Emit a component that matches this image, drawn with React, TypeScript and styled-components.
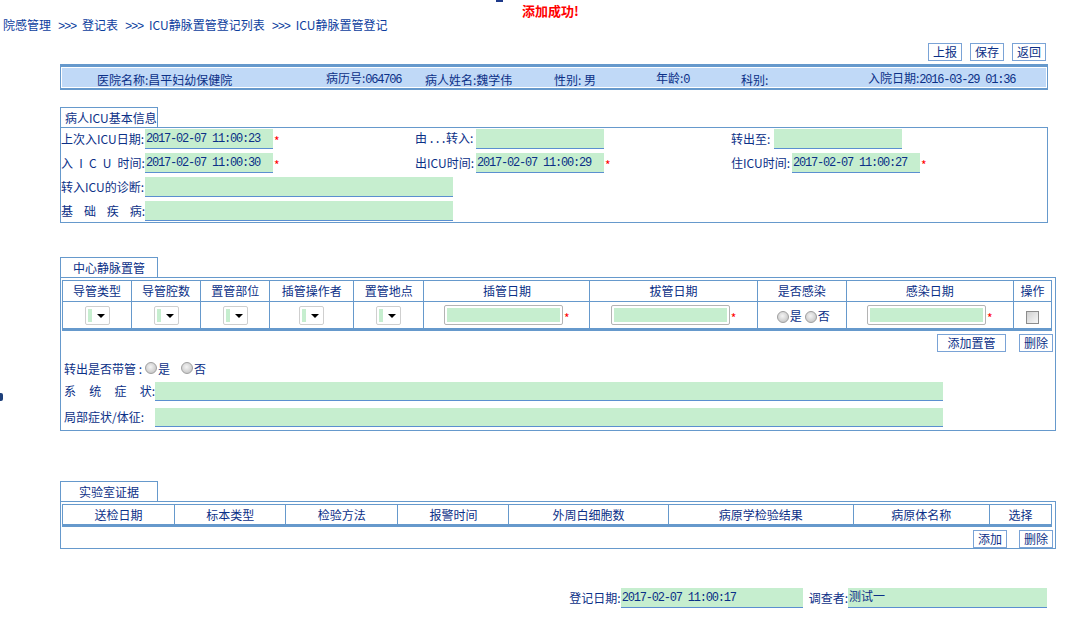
import React from 'react';
import styled, { createGlobalStyle } from 'styled-components';

const line = '#6699cc';
const ink = '#0b3087';
const green = '#c6eecf';

const GlobalStyle = createGlobalStyle`
  html, body { margin: 0; padding: 0; background: #fff; }
  body {
    font-family: "Noto Sans CJK SC", "Liberation Sans", sans-serif;
    font-size: 12px;
    color: ${ink};
  }
  * { box-sizing: border-box; }
`;

const Page = styled.div`
  position: relative;
  width: 1081px;
  height: 641px;
  overflow: hidden;
`;

// 顶部小标记
const TopMark = styled.span`
  position: absolute;
  left: 496px;
  top: 0;
  width: 7px;
  height: 2px;
  background: #1e3a8a;
`;

const SideMark = styled.span`
  position: absolute;
  left: 0;
  top: 393px;
  width: 3px;
  height: 8px;
  background: #1d3f7a;
  border-radius: 0 2px 2px 0;
`;

const Notice = styled.div`
  height: 18px;
  padding-top: 2px;
  padding-left: 20px;
  text-align: center;
  line-height: 18px;
  font-size: 13px;
  font-weight: bold;
  color: #ff0000;
`;

const Crumbs = styled.div`
  padding-left: 3px;
  line-height: 14px;
  height: 14px;
  color: #0d3e9e;
  white-space: nowrap;
`;

const Mono = styled.span`
  font-family: "Liberation Mono", "DejaVu Sans Mono", monospace;
  font-size: 12px;
  letter-spacing: -1.2px;
`;

const Sep = styled(Mono)`
  margin: 0 6px 0 7px;
`;

const Dots = styled(Mono)`
  margin-left: 1px;
`;

const Toolbar = styled.div<{ $top?: number; $right?: number; $gap?: number }>`
  display: flex;
  justify-content: flex-end;
  gap: ${p => p.$gap ?? 8}px;
  margin-top: ${p => p.$top ?? 0}px;
  padding-right: ${p => p.$right ?? 0}px;
`;

const Btn = styled.button`
  height: 18px;
  padding: 0 4px;
  background: #fff;
  border: 1px solid #7aa3d6;
  color: ${ink};
  font: inherit;
  font-size: 12px;
  line-height: 16px;
  cursor: pointer;
`;

const InfoBar = styled.div`
  margin: 3px 0 0 60px;
  width: 988px;
  border: solid ${line};
  border-width: 3px 1px 2px;
  background: #fff;
  padding: 1px;
`;

const InfoInner = styled.div`
  display: grid;
  grid-template-columns: 229px 99px 129px 102px 85px 127px 1fr;
  align-items: center;
  height: 19px;
  padding-left: 35px;
  background: #c0d9f7;
  white-space: nowrap;
  line-height: 19px;
`;

const Section = styled.section<{ $top: number; $width: number }>`
  margin: ${p => p.$top}px 0 0 60px;
  width: ${p => p.$width}px;
`;

const Tab = styled.div<{ $center?: boolean }>`
  width: 98px;
  height: 20px;
  border: 1px solid ${line};
  border-bottom: none;
  line-height: 19px;
  padding-left: ${p => (p.$center ? 0 : 4)}px;
  text-align: ${p => (p.$center ? 'center' : 'left')};
  font-size: 12px;
`;

const Panel = styled.div<{ $pb?: number }>`
  border: 1px solid ${line};
  padding-bottom: ${p => p.$pb ?? 0}px;
`;

const BaseGrid = styled.div`
  display: grid;
  grid-template-columns: 354px 316px 1fr;
  grid-auto-rows: 20px;
  row-gap: 4px;
  padding: 1px 0;
`;

const Field = styled.div<{ $wide?: boolean }>`
  display: flex;
  align-items: center;
  white-space: nowrap;
  ${p => (p.$wide ? 'grid-column: 1 / -1;' : '')}
`;

const Label = styled.span<{ $w?: number }>`
  ${p => (p.$w ? `width: ${p.$w}px;` : '')}
  flex-shrink: 0;
  line-height: 16px;
`;

const Spread = styled.span<{ $w: number }>`
  display: flex;
  justify-content: space-between;
  width: ${p => p.$w}px;
  flex-shrink: 0;
  line-height: 16px;
`;

const TextBox = styled.div<{ $w: number; $h?: number }>`
  width: ${p => p.$w}px;
  height: ${p => p.$h ?? 20}px;
  background: ${green};
  border-bottom: 1px solid #5b8fd0;
  line-height: 16px;
  padding-left: 1px;
  overflow: hidden;
  white-space: nowrap;
`;

const Star = styled.span`
  color: #ff0000;
  margin: 4px 0 0 1px;
  font-size: 12px;
  line-height: 12px;
`;

const Table = styled.table`
  width: 990px;
  margin: 2px 0 0 1px;
  border-collapse: collapse;
  table-layout: fixed;
  border: 1px solid ${line};
  border-bottom: 3px solid ${line};
`;

const Th = styled.th`
  height: 21px;
  border: 1px solid ${line};
  font-weight: normal;
  text-align: center;
  padding: 0;
  line-height: 16px;
  color: ${ink};
`;

const Td = styled.td`
  height: 28px;
  border: 1px solid ${line};
  text-align: center;
  padding: 0;
  white-space: nowrap;
`;

const Picker = styled.span`
  display: inline-flex;
  align-items: center;
  width: 25px;
  height: 19px;
  border: 1px solid #cfcfcf;
  border-radius: 2px;
  background: #fff;
  vertical-align: middle;
  padding-left: 2px;
`;

const PickerFill = styled.span`
  width: 4px;
  height: 13px;
  background: ${green};
`;

const PickerArrow = styled.span`
  margin-left: auto;
  margin-right: 4px;
  border-left: 4px solid transparent;
  border-right: 4px solid transparent;
  border-top: 4px solid #000;
`;

const CellDate = styled.span`
  display: inline-block;
  width: 119px;
  height: 20px;
  border: 1px solid #b4b4b4;
  border-radius: 2px;
  padding: 2px;
  background: ${green};
  background-clip: content-box;
  vertical-align: middle;
`;

const CellStar = styled(Star)`
  display: inline-block;
  vertical-align: middle;
  margin: 6px 0 0 1px;
`;

const Radio = styled.span`
  display: inline-block;
  width: 12px;
  height: 12px;
  border-radius: 50%;
  border: 1px solid #a0a0a0;
  background: radial-gradient(circle at 45% 40%, #f4f4f4 0%, #c9c9c9 75%);
  vertical-align: -2px;
  margin: 0 1px 0 3px;
`;

const Check = styled.span`
  display: inline-block;
  width: 13px;
  height: 13px;
  border: 1px solid #8c8c8c;
  background: linear-gradient(135deg, #d0d0d0, #f8f8f8);
  vertical-align: middle;
`;

const OptionRow = styled.div<{ $top: number; $h: number }>`
  display: flex;
  align-items: center;
  margin-top: ${p => p.$top}px;
  height: ${p => p.$h}px;
  padding-left: 3px;
  white-space: nowrap;
`;

const Footer = styled.div`
  display: flex;
  justify-content: flex-end;
  align-items: center;
  margin-top: 39px;
  padding-right: 34px;
  white-space: nowrap;
`;

const FooterGap = styled.span`
  width: 6px;
`;

const lineCols = [69, 69, 69, 84, 70, 166, 167, 89, 167, 38];
const lineHeads = ['导管类型', '导管腔数', '置管部位', '插管操作者', '置管地点', '插管日期', '拔管日期', '是否感染', '感染日期', '操作'];
const labCols = [112, 111, 112, 111, 159, 185, 136, 62];
const labHeads = ['送检日期', '标本类型', '检验方法', '报警时间', '外周白细胞数', '病原学检验结果', '病原体名称', '选择'];

const SelectBox = () => (
  <Picker>
    <PickerFill />
    <PickerArrow />
  </Picker>
);

const DateCell = () => (
  <>
    <CellDate />
    <CellStar>*</CellStar>
  </>
);

export default function App() {
  return (
    <Page>
      <GlobalStyle />
      <TopMark />
      <SideMark />
      <Notice>添加成功!</Notice>
      <Crumbs>
        院感管理<Sep>&gt;&gt;&gt;</Sep>登记表<Sep>&gt;&gt;&gt;</Sep>ICU静脉置管登记列表<Sep>&gt;&gt;&gt;</Sep>ICU静脉置管登记
      </Crumbs>

      <Toolbar $top={11} $right={35}>
        <Btn>上报</Btn>
        <Btn>保存</Btn>
        <Btn>返回</Btn>
      </Toolbar>

      <InfoBar>
        <InfoInner>
          <span>医院名称:昌平妇幼保健院</span>
          <span>病历号:<Mono>064706</Mono></span>
          <span>病人姓名:魏学伟</span>
          <span>性别: 男</span>
          <span>年龄:<Mono>0</Mono></span>
          <span>科别:</span>
          <span>入院日期:<Mono>2016-03-29 01:36</Mono></span>
        </InfoInner>
      </InfoBar>

      <Section $top={17} $width={988}>
        <Tab>病人ICU基本信息</Tab>
        <Panel>
          <BaseGrid>
            <Field>
              <Label $w={84}>上次入ICU日期:</Label>
              <TextBox $w={128}><Mono>2017-02-07 11:00:23</Mono></TextBox>
              <Star>*</Star>
            </Field>
            <Field>
              <Label $w={61}>由<Dots>...</Dots>转入:</Label>
              <TextBox $w={128} />
            </Field>
            <Field>
              <Label $w={43}>转出至:</Label>
              <TextBox $w={128} />
            </Field>

            <Field>
              <Spread $w={84}><span>入</span><span>I</span><span>C</span><span>U</span><span>时间:</span></Spread>
              <TextBox $w={128}><Mono>2017-02-07 11:00:30</Mono></TextBox>
              <Star>*</Star>
            </Field>
            <Field>
              <Label $w={61}>出ICU时间:</Label>
              <TextBox $w={128}><Mono>2017-02-07 11:00:29</Mono></TextBox>
              <Star>*</Star>
            </Field>
            <Field>
              <Label $w={61}>住ICU时间:</Label>
              <TextBox $w={128}><Mono>2017-02-07 11:00:27</Mono></TextBox>
              <Star>*</Star>
            </Field>

            <Field $wide>
              <Label $w={84}>转入ICU的诊断:</Label>
              <TextBox $w={308} />
            </Field>
            <Field $wide>
              <Spread $w={84}><span>基</span><span>础</span><span>疾</span><span>病:</span></Spread>
              <TextBox $w={308} />
            </Field>
          </BaseGrid>
        </Panel>
      </Section>

      <Section $top={34} $width={996}>
        <Tab $center>中心静脉置管</Tab>
        <Panel $pb={3}>
          <Table>
            <colgroup>
              {lineCols.map((w, i) => <col key={i} style={{ width: w }} />)}
            </colgroup>
            <thead>
              <tr>
                {lineHeads.map(h => <Th key={h}>{h}</Th>)}
              </tr>
            </thead>
            <tbody>
              <tr>
                <Td><SelectBox /></Td>
                <Td><SelectBox /></Td>
                <Td><SelectBox /></Td>
                <Td><SelectBox /></Td>
                <Td><SelectBox /></Td>
                <Td><DateCell /></Td>
                <Td><DateCell /></Td>
                <Td><Radio />是<Radio />否</Td>
                <Td><DateCell /></Td>
                <Td><Check /></Td>
              </tr>
            </tbody>
          </Table>
          <Toolbar $top={3} $right={2} $gap={13}>
            <Btn style={{ width: 69 }}>添加置管</Btn>
            <Btn>删除</Btn>
          </Toolbar>
          <OptionRow $top={7} $h={18}>
            转出是否带管 :<Radio />是 &nbsp;&nbsp;<Radio />否
          </OptionRow>
          <OptionRow $top={4} $h={20}>
            <Spread $w={91}><span>系</span><span>统</span><span>症</span><span>状:</span></Spread>
            <TextBox $w={788} $h={19} />
          </OptionRow>
          <OptionRow $top={6} $h={20}>
            <Label $w={91}>局部症状/体征:</Label>
            <TextBox $w={788} $h={19} />
          </OptionRow>
        </Panel>
      </Section>

      <Section $top={50} $width={996}>
        <Tab $center>实验室证据</Tab>
        <Panel>
          <Table>
            <colgroup>
              {labCols.map((w, i) => <col key={i} style={{ width: w }} />)}
            </colgroup>
            <thead>
              <tr>
                {labHeads.map(h => <Th key={h}>{h}</Th>)}
              </tr>
            </thead>
          </Table>
          <Toolbar $top={3} $right={2} $gap={12}>
            <Btn>添加</Btn>
            <Btn>删除</Btn>
          </Toolbar>
        </Panel>
      </Section>

      <Footer>
        <Label>登记日期:</Label>
        <TextBox $w={182}><Mono>2017-02-07 11:00:17</Mono></TextBox>
        <FooterGap />
        <Label>调查者:</Label>
        <TextBox $w={199}>测试一</TextBox>
      </Footer>
    </Page>
  );
}
